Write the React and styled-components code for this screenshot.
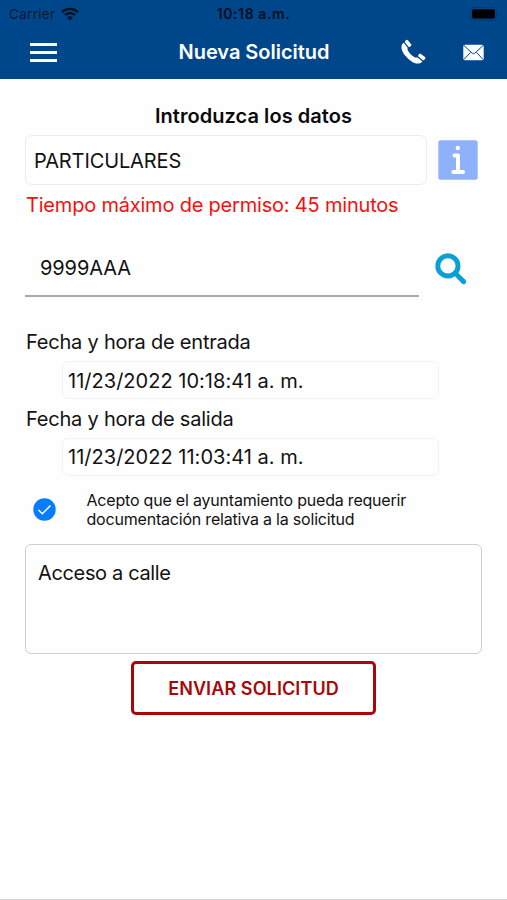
import React from "react";
import styled, { createGlobalStyle } from "styled-components";

export default function App() {
  return (
    <Screen>
      <GlobalStyle />
      <Header>
        <StatusBar>
          <Carrier>
            <span>Carrier</span>
            <WifiIcon />
          </Carrier>
          <Clock>10:18 a.m.</Clock>
          <BatteryIcon />
        </StatusBar>
        <NavBar>
          <MenuButton aria-label="Menú">
            <span />
            <span />
            <span />
          </MenuButton>
          <NavTitle>Nueva Solicitud</NavTitle>
          <NavActions>
            <PhoneIcon />
            <MailIcon />
          </NavActions>
        </NavBar>
      </Header>

      <Form>
        <FormTitle>Introduzca los datos</FormTitle>
        <TypeRow>
          <TypeField>PARTICULARES</TypeField>
          <InfoIcon />
        </TypeRow>
        <Warning>Tiempo máximo de permiso: 45 minutos</Warning>

        <PlateRow>
          <PlateField>9999AAA</PlateField>
          <SearchIcon />
        </PlateRow>

        <DateLabel>Fecha y hora de entrada</DateLabel>
        <DateField>11/23/2022 10:18:41 a. m.</DateField>
        <DateLabel>Fecha y hora de salida</DateLabel>
        <DateField>11/23/2022 11:03:41 a. m.</DateField>

        <ConsentRow>
          <CheckIcon />
          <ConsentText>
            Acepto que el ayuntamiento pueda requerir
            <br />
            documentación relativa a la solicitud
          </ConsentText>
        </ConsentRow>

        <Reason>Acceso a calle</Reason>
        <SubmitButton>ENVIAR SOLICITUD</SubmitButton>
      </Form>
    </Screen>
  );
}

function WifiIcon() {
  return (
    <svg width="18" height="14" viewBox="0 0 18 14" fill="none">
      <path d="M1.2 5.1a11.2 11.2 0 0 1 15.6 0" stroke="#05101f" strokeWidth="2.3" />
      <path d="M4 8.1a7.2 7.2 0 0 1 10 0" stroke="#05101f" strokeWidth="2.1" />
      <path d="M9 13.6 6.2 10.7a4 4 0 0 1 5.6 0Z" fill="#05101f" />
    </svg>
  );
}

function BatteryIcon() {
  return (
    <svg width="30" height="14" viewBox="0 0 30 14">
      <rect x="0.5" y="0.5" width="26" height="12.5" rx="3.5" fill="none" stroke="#03376f" />
      <rect x="2" y="2.2" width="23" height="9.2" rx="2" fill="#000" />
      <path d="M28 4.8q1.6 2 0 4Z" fill="#03376f" />
    </svg>
  );
}

function PhoneIcon() {
  return (
    <svg width="26" height="26" viewBox="0 0 26 26" fill="#fff">
      <path d="M1 5.5C1.3 4.7 2 4 2.8 3.7L6.8 9C6.2 9.9 6.4 10.7 7 11.8C8.4 14.2 10.8 16.6 13.2 18C14.3 18.6 15.1 18.8 16 18.2L21.3 22.2C21 23 20.3 23.7 19.5 24C17 25.2 13.5 24.6 10 22C5 18.3 -1.5 11.5 1 5.5Z" />
      <rect x="3.3" y="2.5" width="7.6" height="3.7" rx="1.2" transform="rotate(52 7.1 4.35)" />
      <rect x="17" y="16.1" width="7.6" height="3.7" rx="1.2" transform="rotate(38 20.8 17.95)" />
    </svg>
  );
}

function MailIcon() {
  return (
    <svg width="21" height="17" viewBox="0 0 21 17">
      <rect x="0.3" y="0.7" width="20.4" height="15.6" rx="1.8" fill="#fff" />
      <path
        d="M1 1.6 9.2 9.2q1.3 1.1 2.6 0L20 1.6M1 15.4l6.5-7M20 15.4l-6.5-7"
        fill="none"
        stroke="#00468b"
        strokeWidth="1"
      />
    </svg>
  );
}

function InfoIcon() {
  return (
    <svg width="40" height="40" viewBox="0 0 40 40">
      <rect x="0.3" y="0.3" width="39.4" height="39.4" rx="2.5" fill="#8fb1fc" />
      <circle cx="19.8" cy="8" r="2.2" fill="#fff" />
      <path
        d="M16.5 15.500H20V31.500M15.3 32H25"
        fill="none"
        stroke="#fff"
        strokeWidth="4"
        strokeLinecap="round"
        strokeLinejoin="round"
      />
    </svg>
  );
}

function SearchIcon() {
  return (
    <svg width="32" height="32" viewBox="0 0 32 32" fill="none" stroke="#0aa0d6">
      <circle cx="12.9" cy="12.9" r="10.1" strokeWidth="4.9" />
      <path d="M21 21l7.700 7.700" strokeWidth="4.8" />
      <path d="M28 28l.7.700" strokeWidth="4.8" strokeLinecap="round" />
    </svg>
  );
}

function CheckIcon() {
  return (
    <svg width="23" height="23" viewBox="0 0 23 23">
      <circle cx="11.5" cy="11.5" r="11.2" fill="#087cff" />
      <path d="M5.5 12l3.800 3.800 8.200-8.300" fill="none" stroke="#fff" strokeWidth="1.5" />
    </svg>
  );
}

const GlobalStyle = createGlobalStyle`
  * {
    box-sizing: border-box;
  }

  body {
    margin: 0;
    background: #fefefe;
    color: #121212;
    font-family: Inter, "Liberation Sans", sans-serif;
  }

  svg {
    display: block;
    flex-shrink: 0;
  }
`;

const Screen = styled.div`
  width: 507px;
  height: 900px;
  background: #fefefe;
  border-bottom: 1px solid #d4d4d4;
  overflow: hidden;
`;

const Header = styled.header`
  height: 79px;
  background: #00468b;
`;

const StatusBar = styled.div`
  display: grid;
  grid-template-columns: 1fr auto 1fr;
  align-items: center;
  height: 27px;
  padding: 0 5px;
  color: #05101f;
  font-size: 13.5px;

  > svg {
    justify-self: end;
    margin-right: 2px;
  }
`;

const Carrier = styled.div`
  display: flex;
  align-items: center;
  gap: 6px;
  margin-left: 4px;
  letter-spacing: 0.3px;
  color: #061a35;
`;

const Clock = styled.div`
  font-size: 14px;
  font-weight: 600;
  letter-spacing: 0.6px;
`;

const NavBar = styled.div`
  display: grid;
  grid-template-columns: 1fr auto 1fr;
  align-items: center;
  height: 50px;
  padding: 0 23px 0 24px;
`;

const MenuButton = styled.button`
  display: flex;
  flex-direction: column;
  gap: 5px;
  width: 27px;
  margin-left: 6px;
  padding: 0;
  border: 0;
  background: none;

  span {
    height: 3px;
    background: #fff;
  }
`;

const NavTitle = styled.h1`
  margin: 0;
  color: #fff;
  font-size: 20px;
  font-weight: 600;
  letter-spacing: -0.03px;
`;

const NavActions = styled.div`
  display: flex;
  align-items: center;
  justify-content: flex-end;
  gap: 36px;
`;

const Form = styled.main`
  display: flex;
  flex-direction: column;
  padding: 25px 25px 0;
  font-size: 20px;
  line-height: 24px;
`;

const FormTitle = styled.h2`
  margin: 0 0 7px;
  color: #0b0b0b;
  font-size: 20px;
  font-weight: 600;
  text-align: center;
  letter-spacing: 0.05px;
`;

const TypeRow = styled.div`
  display: flex;
  align-items: center;
  gap: 11px;
`;

const TypeField = styled.div`
  display: flex;
  align-items: center;
  width: 402px;
  height: 50px;
  padding: 2px 0 0 8px;
  border: 1px solid #ececec;
  border-radius: 7px;
  letter-spacing: -0.12px;
`;

const Warning = styled.p`
  margin: 8px 0 0 1px;
  color: #f50f0f;
  letter-spacing: -0.2px;
`;

const PlateRow = styled.div`
  display: flex;
  align-items: center;
  gap: 16px;
  height: 57px;
  margin-top: 23px;
`;

const PlateField = styled.div`
  display: flex;
  align-items: center;
  width: 394px;
  height: 57px;
  padding-left: 15px;
  border-bottom: 2px solid #a9a9a9;
  letter-spacing: -0.1px;
`;

const DateLabel = styled.label`
  margin-left: 1px;
  letter-spacing: -0.22px;

  ${PlateRow} + & {
    margin-top: 33px;
  }
`;

const DateField = styled.div`
  display: flex;
  align-items: center;
  width: 377px;
  height: 38px;
  margin: 7px 0 8px 37px;
  padding: 0 0 0 5px;
  border: 1px solid #f2f2f2;
  border-radius: 6px;
  letter-spacing: 0.02px;

  ${PlateRow} + ${DateLabel} + & {
    padding-top: 1px;
  }
`;

const ConsentRow = styled.div`
  display: flex;
  align-items: center;
  gap: 30.5px;
  margin: 7px 0 0 8px;

  svg {
    margin-bottom: 2px;
  }
`;

const ConsentText = styled.p`
  margin: 0;
  font-size: 16px;
  line-height: 19px;
  letter-spacing: -0.2px;
`;

const Reason = styled.div`
  height: 110px;
  margin-top: 15px;
  padding: 16px 12px;
  border: 1.5px solid #cfcfcf;
  border-radius: 6px;
  letter-spacing: -0.35px;
`;

const SubmitButton = styled.button`
  align-self: center;
  width: 245px;
  height: 54px;
  margin-top: 7px;
  padding: 0;
  border: 3px solid #a80808;
  border-radius: 5px;
  background: #fefefe;
  color: #a80808;
  font: 600 18px Inter, "Liberation Sans", sans-serif;
  letter-spacing: 0.1px;
`;
